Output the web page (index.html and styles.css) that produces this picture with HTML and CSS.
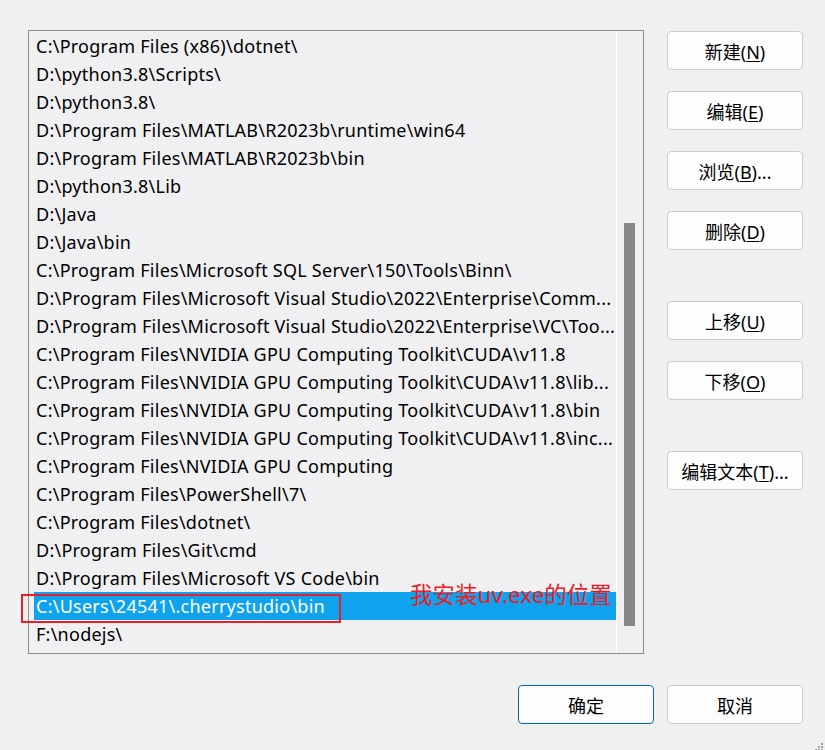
FILE: index.html
```html
<!DOCTYPE html>
<html lang="zh">
<head>
<meta charset="utf-8">
<link rel="stylesheet" href="styles.css">
</head>
<body>
<div class="dialog">
  <div class="main">
    <div class="listbox">
      <div class="rows">
        <div class="row">C:\Program Files (x86)\dotnet\</div>
        <div class="row">D:\python3.8\Scripts\</div>
        <div class="row">D:\python3.8\</div>
        <div class="row">D:\Program Files\MATLAB\R2023b\runtime\win64</div>
        <div class="row">D:\Program Files\MATLAB\R2023b\bin</div>
        <div class="row">D:\python3.8\Lib</div>
        <div class="row">D:\Java</div>
        <div class="row">D:\Java\bin</div>
        <div class="row">C:\Program Files\Microsoft SQL Server\150\Tools\Binn\</div>
        <div class="row">D:\Program Files\Microsoft Visual Studio\2022\Enterprise\Comm...</div>
        <div class="row">D:\Program Files\Microsoft Visual Studio\2022\Enterprise\VC\Too...</div>
        <div class="row">C:\Program Files\NVIDIA GPU Computing Toolkit\CUDA\v11.8</div>
        <div class="row">C:\Program Files\NVIDIA GPU Computing Toolkit\CUDA\v11.8\lib...</div>
        <div class="row">C:\Program Files\NVIDIA GPU Computing Toolkit\CUDA\v11.8\bin</div>
        <div class="row">C:\Program Files\NVIDIA GPU Computing Toolkit\CUDA\v11.8\inc...</div>
        <div class="row">C:\Program Files\NVIDIA GPU Computing</div>
        <div class="row">C:\Program Files\PowerShell\7\</div>
        <div class="row">C:\Program Files\dotnet\</div>
        <div class="row">D:\Program Files\Git\cmd</div>
        <div class="row">D:\Program Files\Microsoft VS Code\bin</div>
        <div class="row selected">C:\Users\24541\.cherrystudio\bin</div>
        <div class="row">F:\nodejs\</div>
      </div>
      <div class="scrollbar"><div class="thumb"></div></div>
      <div class="callout">我安装uv.exe的位置</div>
      <div class="redbox"></div>
    </div>
    <div class="side">
      <div class="group">
        <button class="btn">新建(<u>N</u>)</button>
        <button class="btn">编辑(<u>E</u>)</button>
        <button class="btn">浏览(<u>B</u>)...</button>
        <button class="btn">删除(<u>D</u>)</button>
      </div>
      <div class="group">
        <button class="btn">上移(<u>U</u>)</button>
        <button class="btn">下移(<u>O</u>)</button>
      </div>
      <div class="group">
        <button class="btn">编辑文本(<u>T</u>)...</button>
      </div>
    </div>
  </div>
  <div class="footer">
    <button class="btn primary">确定</button>
    <button class="btn">取消</button>
  </div>
  <div class="grip">
    <svg width="12" height="12" viewBox="0 0 12 12">
      <rect x="9" y="1" width="2" height="2" fill="#a0a0a0"/>
      <rect x="6" y="4" width="2" height="2" fill="#a0a0a0"/>
      <rect x="9" y="4" width="2" height="2" fill="#a0a0a0"/>
      <rect x="3" y="7" width="2" height="2" fill="#a0a0a0"/>
      <rect x="6" y="7" width="2" height="2" fill="#a0a0a0"/>
      <rect x="9" y="7" width="2" height="2" fill="#a0a0a0"/>
    </svg>
  </div>
</div>
</body>
</html>
```
FILE: styles.css
```css
html, body {
  margin: 0;
  padding: 0;
  background: #f0f0f0;
}
body {
  width: 825px;
  height: 750px;
  overflow: hidden;
  font-family: "Noto Sans", "Noto Sans CJK SC", sans-serif;
  color: #000;
}
.dialog {
  position: relative;
  width: 825px;
  height: 750px;
  box-sizing: border-box;
  padding: 30px 0 0 28px;
}
.main {
  display: flex;
  align-items: flex-start;
}
.listbox {
  position: relative;
  width: 616px;
  height: 624px;
  box-sizing: border-box;
  border: 1px solid #8c8c8c;
  background: #f0f0f2;
  display: flex;
}
.rows {
  width: 588px;
  padding: 1px 0 0 5px;
  box-sizing: border-box;
  border-right: 1px solid #ffffff;
  overflow: hidden;
}
.row {
  height: 28px;
  line-height: 28px;
  font-size: 18px;
  letter-spacing: 0.25px;
  padding-left: 2px;
  white-space: nowrap;
  overflow: hidden;
}
.row.selected {
  background: #0fa2ef;
  color: #fff;
}
.scrollbar {
  flex: 1;
  position: relative;
}
.thumb {
  position: absolute;
  left: 7px;
  top: 192px;
  width: 11px;
  height: 403px;
  background: #878787;
}
.callout {
  position: absolute;
  left: 381px;
  top: 549px;
  font-size: 22.5px;
  line-height: 30px;
  color: #ec1c24;
  white-space: nowrap;
}
.redbox {
  position: absolute;
  left: -8px;
  top: 563px;
  width: 320px;
  height: 29px;
  border: 2px solid #e8202a;
  box-sizing: border-box;
}
.side {
  margin-left: 23px;
  margin-top: 1px;
  display: flex;
  flex-direction: column;
  gap: 51px;
}
.group {
  display: flex;
  flex-direction: column;
  gap: 21px;
}
.btn {
  width: 136px;
  height: 39px;
  box-sizing: border-box;
  border: 1px solid #cccccc;
  border-radius: 4px;
  background: #fdfdfd;
  font-family: "Noto Sans", "Noto Sans CJK SC", sans-serif;
  font-size: 18px;
  color: #000;
  padding: 0;
}
.btn u {
  text-underline-offset: 2px;
}
.btn.primary {
  border-color: #0067c0;
}
.footer {
  display: flex;
  justify-content: flex-end;
  gap: 13px;
  margin-top: 31px;
  padding-right: 22px;
}
.grip {
  position: absolute;
  right: 1px;
  bottom: 1px;
  width: 12px;
  height: 12px;
}
```
